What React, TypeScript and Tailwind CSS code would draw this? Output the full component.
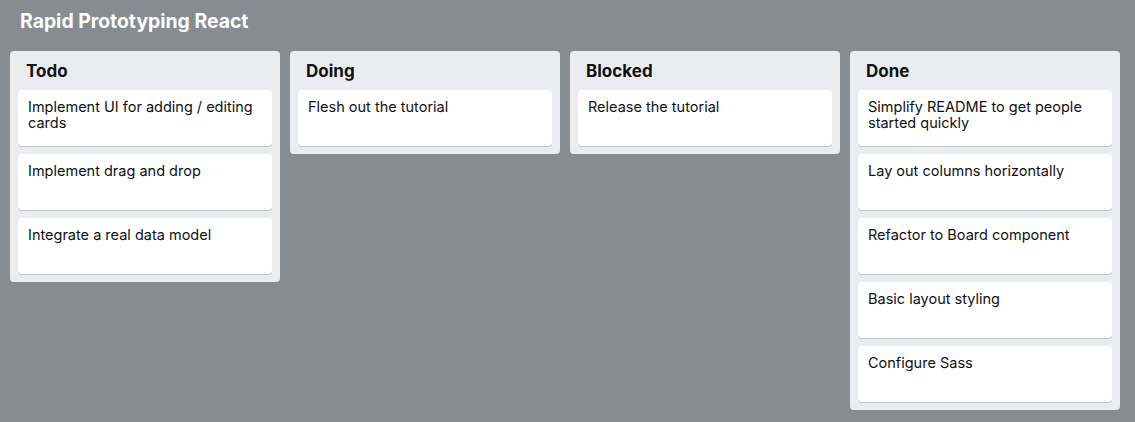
import React from "react";

type Column = { title: string; cards: string[] };

const columns: Column[] = [
  {
    title: "Todo",
    cards: [
      "Implement UI for adding / editing cards",
      "Implement drag and drop",
      "Integrate a real data model",
    ],
  },
  { title: "Doing", cards: ["Flesh out the tutorial"] },
  { title: "Blocked", cards: ["Release the tutorial"] },
  {
    title: "Done",
    cards: [
      "Simplify README to get people started quickly",
      "Lay out columns horizontally",
      "Refactor to Board component",
      "Basic layout styling",
      "Configure Sass",
    ],
  },
];

const App: React.FC = () => {
  return (
    <div className="min-h-screen bg-[#868c92] px-[10px] font-[Inter,'Liberation_Sans',sans-serif]">
      <h1 className="px-[10px] pt-[9px] pb-[18px] text-[19.4px] leading-[24px] font-bold text-white">
        Rapid Prototyping React
      </h1>

      {/* Board */}
      <div className="flex items-start gap-[10px]">
        {columns.map((col) => (
          <div key={col.title} className="w-[270px] shrink-0 rounded-[4px] bg-[#ebecf0] px-[8px] pb-[8px]">
            <h2 className="px-[8px] pt-[10px] pb-[8px] text-[17px] leading-[21px] font-bold text-[#111]">
              {col.title}
            </h2>
            <div className="flex flex-col gap-[8px]">
              {col.cards.map((card) => (
                <div
                  key={card}
                  className="min-h-[56px] rounded-[4px] bg-white px-[10px] pt-[9px] pb-[6px] text-[14.5px] leading-[16px] text-[#111] shadow-[0_1px_0_#c1c7d0]"
                >
                  {card}
                </div>
              ))}
            </div>
          </div>
        ))}
      </div>
    </div>
  );
};

export default App;
